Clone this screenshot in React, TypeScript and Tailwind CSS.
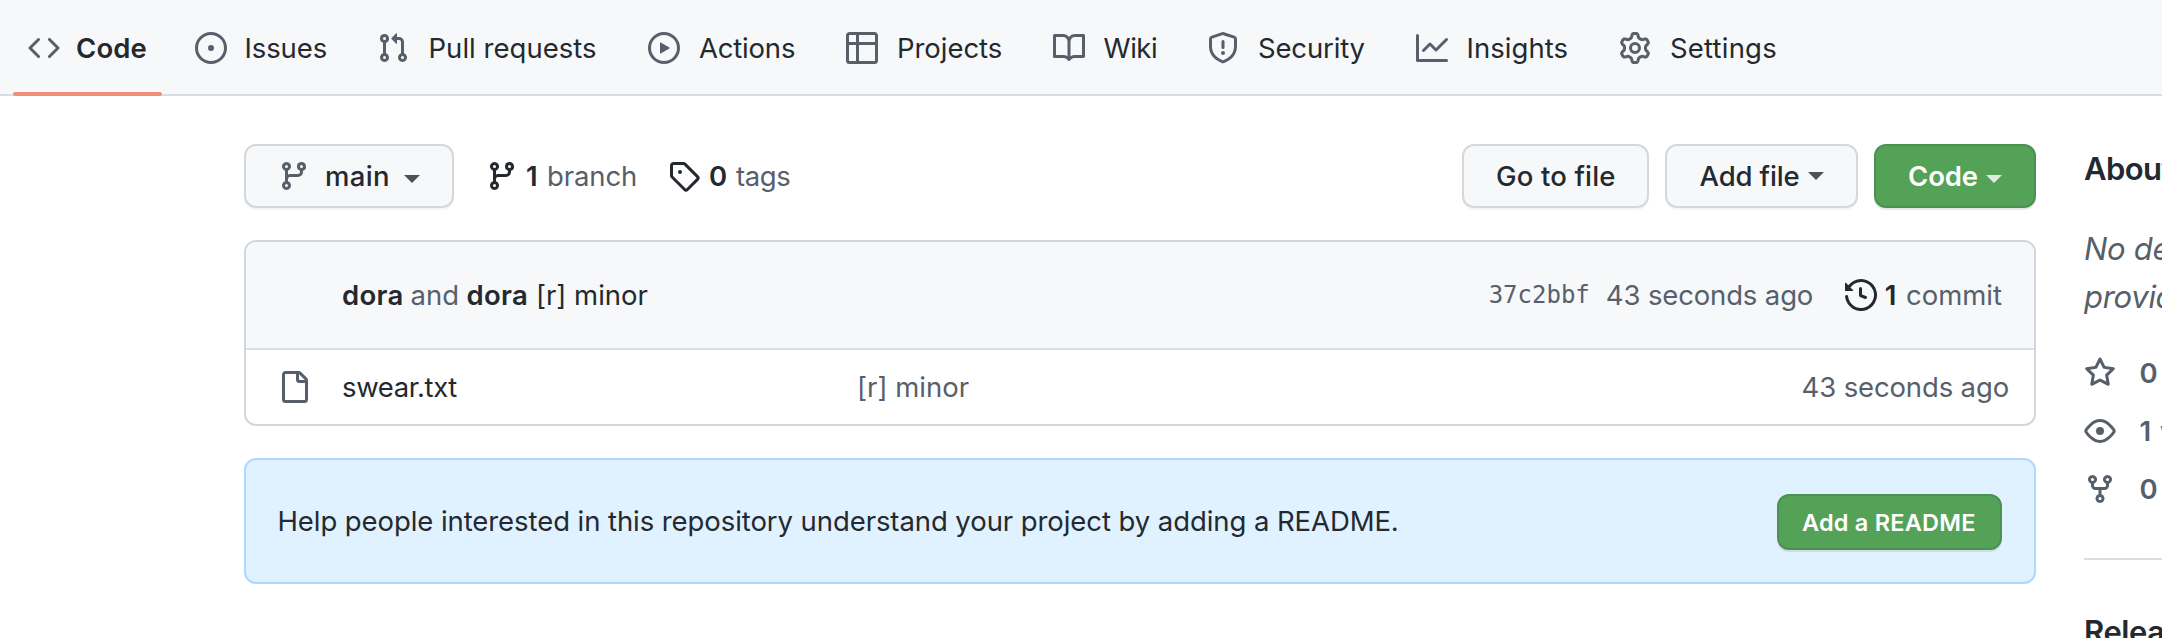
import React from "react";

const PATHS = {
  code: "M4.72 3.22a.75.75 0 011.06 1.06L2.06 8l3.72 3.72a.75.75 0 11-1.06 1.06L.47 8.53a.75.75 0 010-1.06l4.25-4.25zm6.56 0a.75.75 0 10-1.06 1.06L13.94 8l-3.72 3.72a.75.75 0 101.06 1.06l4.25-4.25a.75.75 0 000-1.06l-4.25-4.25z",
  issue: "M8 9.5a1.5 1.5 0 100-3 1.5 1.5 0 000 3zM8 0a8 8 0 100 16A8 8 0 008 0zM1.5 8a6.5 6.5 0 1113 0 6.5 6.5 0 01-13 0z",
  pull: "M7.177 3.073L9.573.677A.25.25 0 0110 .854v4.792a.25.25 0 01-.427.177L7.177 3.427a.25.25 0 010-.354zM3.75 2.5a.75.75 0 100 1.5.75.75 0 000-1.5zm-2.25.75a2.25 2.25 0 113 2.122v5.256a2.251 2.251 0 11-1.5 0V5.372A2.25 2.25 0 011.5 3.25zM11 2.5h-1V4h1a1 1 0 011 1v5.628a2.251 2.251 0 101.5 0V5A2.5 2.5 0 0011 2.5zm1 10.25a.75.75 0 111.5 0 .75.75 0 01-1.5 0zM3.75 12a.75.75 0 100 1.5.75.75 0 000-1.5z",
  play: "M1.5 8a6.5 6.5 0 1113 0 6.5 6.5 0 01-13 0zM8 0a8 8 0 100 16A8 8 0 008 0zM6.379 5.227A.25.25 0 006 5.442v5.117a.25.25 0 00.379.214l4.264-2.559a.25.25 0 000-.428L6.379 5.227z",
  table: "M0 1.75C0 .784.784 0 1.75 0h12.5C15.216 0 16 .784 16 1.75v12.5A1.75 1.75 0 0114.25 16H1.75A1.75 1.75 0 010 14.25V1.75zM1.5 6.5v7.75c0 .138.112.25.25.25H5v-8H1.5zM6.5 6.5v8h7.75a.25.25 0 00.25-.25V6.5h-8zM14.5 5V1.75a.25.25 0 00-.25-.25H6.5V5h8zM5 5V1.5H1.75a.25.25 0 00-.25.25V5H5z",
  book: "M0 1.75A.75.75 0 01.75 1h4.253c1.227 0 2.317.59 3 1.501A3.744 3.744 0 0111.006 1h4.245a.75.75 0 01.75.75v10.5a.75.75 0 01-.75.75h-4.507a2.25 2.25 0 00-1.591.659l-.622.621a.75.75 0 01-1.06 0l-.622-.621A2.25 2.25 0 005.258 13H.75a.75.75 0 01-.75-.75V1.75zm8.755 3a2.25 2.25 0 012.25-2.25H14.5v9h-3.757c-.71 0-1.4.201-1.992.572l.004-7.322zm-1.504 7.324l.004-5.073-.002-2.253A2.25 2.25 0 005.003 2.5H1.5v9h3.757a3.75 3.75 0 011.994.574z",
  shield: "M7.467.133a1.75 1.75 0 011.066 0l5.25 1.68A1.75 1.75 0 0115 3.48V7c0 1.566-.32 3.182-1.303 4.682-.983 1.498-2.585 2.813-5.032 3.855a1.7 1.7 0 01-1.33 0c-2.447-1.042-4.049-2.357-5.032-3.855C1.32 10.182 1 8.566 1 7V3.48a1.75 1.75 0 011.217-1.667l5.25-1.68zm.61 1.429a.25.25 0 00-.153 0l-5.25 1.68a.25.25 0 00-.174.238V7c0 1.358.275 2.666 1.057 3.86.784 1.194 2.121 2.34 4.366 3.297a.2.2 0 00.154 0c2.245-.956 3.582-2.104 4.366-3.298C13.225 9.666 13.5 8.36 13.5 7V3.48a.25.25 0 00-.174-.237l-5.25-1.68zM9 10.5a1 1 0 11-2 0 1 1 0 012 0zm-.25-5.75a.75.75 0 10-1.5 0v3a.75.75 0 001.5 0v-3z",
  graph: "M1.5 1.75a.75.75 0 00-1.5 0v12.5c0 .414.336.75.75.75h14.5a.75.75 0 000-1.5H1.5V1.75zm14.28 2.53a.75.75 0 00-1.06-1.06L10 7.94 7.53 5.47a.75.75 0 00-1.06 0L3.22 8.72a.75.75 0 001.06 1.06L7 7.06l2.47 2.47a.75.75 0 001.06 0l5.25-5.25z",
  gear: "M7.429 1.525a6.593 6.593 0 011.142 0c.036.003.108.036.137.146l.289 1.105c.147.56.55.967.997 1.189.174.086.341.183.501.29.417.278.97.423 1.53.27l1.102-.303c.11-.03.175.016.195.046.219.31.41.641.573.989.014.031.022.11-.059.19l-.815.806c-.411.406-.562.957-.53 1.456a4.588 4.588 0 010 .582c-.032.499.119 1.05.53 1.456l.815.806c.08.08.073.159.059.19a6.494 6.494 0 01-.573.99c-.02.029-.086.074-.195.045l-1.103-.303c-.559-.153-1.112-.008-1.529.27-.16.107-.327.204-.5.29-.449.222-.851.628-.998 1.189l-.289 1.105c-.029.11-.101.143-.137.146a6.613 6.613 0 01-1.142 0c-.036-.003-.108-.037-.137-.146l-.289-1.105c-.147-.56-.55-.967-.997-1.189a4.502 4.502 0 01-.501-.29c-.417-.278-.97-.423-1.53-.27l-1.102.303c-.11.03-.175-.016-.195-.046a6.492 6.492 0 01-.573-.989c-.014-.031-.022-.11.059-.19l.815-.806c.411-.406.562-.957.53-1.456a4.587 4.587 0 010-.582c.032-.499-.119-1.05-.53-1.456l-.815-.806c-.08-.08-.073-.159-.059-.19a6.44 6.44 0 01.573-.99c.02-.029.086-.075.195-.045l1.103.303c.559.153 1.112.008 1.529-.27.16-.107.327-.204.5-.29.449-.222.851-.628.998-1.189l.289-1.105c.029-.11.101-.143.137-.146zM8 0c-.236 0-.47.01-.701.03-.743.065-1.29.615-1.458 1.261l-.29 1.106c-.017.066-.078.158-.211.224a5.994 5.994 0 00-.668.386c-.123.082-.233.09-.3.071L3.27 2.776c-.644-.177-1.392.02-1.82.63a7.977 7.977 0 00-.704 1.217c-.315.675-.111 1.422.363 1.891l.815.806c.05.048.098.147.088.294a6.084 6.084 0 000 .772c.01.147-.038.246-.088.294l-.815.806c-.474.469-.678 1.216-.363 1.891.2.428.436.835.704 1.218.428.609 1.176.806 1.82.63l1.103-.303c.066-.019.176-.011.299.071.213.143.436.272.668.386.133.066.194.158.212.224l.289 1.106c.169.646.715 1.196 1.458 1.26a8.094 8.094 0 001.402 0c.743-.064 1.29-.614 1.458-1.26l.29-1.106c.017-.066.078-.158.211-.224a5.98 5.98 0 00.668-.386c.123-.082.233-.09.3-.071l1.102.302c.644.177 1.392-.02 1.82-.63.268-.382.505-.789.704-1.217.315-.675.111-1.422-.364-1.891l-.814-.806c-.05-.048-.098-.147-.088-.294a6.1 6.1 0 000-.772c-.01-.147.039-.246.088-.294l.814-.806c.475-.469.679-1.216.364-1.891a7.992 7.992 0 00-.704-1.218c-.428-.609-1.176-.806-1.82-.63l-1.103.303c-.066.019-.176.011-.299-.071a5.991 5.991 0 00-.668-.386c-.133-.066-.194-.158-.212-.224L10.16 1.29C9.99.645 9.444.095 8.701.031A8.094 8.094 0 008 0zm1.5 8a1.5 1.5 0 11-3 0 1.5 1.5 0 013 0zM11 8a3 3 0 11-6 0 3 3 0 016 0z",
  branch: "M11.75 2.5a.75.75 0 100 1.5.75.75 0 000-1.5zm-2.25.75a2.25 2.25 0 113 2.122V6A2.5 2.5 0 0110 8.5H6a1 1 0 00-1 1v1.128a2.251 2.251 0 11-1.5 0V5.372a2.25 2.25 0 111.5 0v1.836A2.492 2.492 0 016 7h4a1 1 0 001-1v-.628A2.25 2.25 0 019.5 3.25zM4.25 12a.75.75 0 100 1.5.75.75 0 000-1.5zM3.5 3.25a.75.75 0 111.5 0 .75.75 0 01-1.5 0z",
  tag: "M2.5 7.775V2.75a.25.25 0 01.25-.25h5.025a.25.25 0 01.177.073l6.25 6.25a.25.25 0 010 .354l-5.025 5.025a.25.25 0 01-.354 0l-6.25-6.25a.25.25 0 01-.073-.177zm-1.5 0V2.75C1 1.784 1.784 1 2.75 1h5.025c.464 0 .91.184 1.238.513l6.25 6.25a1.75 1.75 0 010 2.474l-5.026 5.026a1.75 1.75 0 01-2.474 0l-6.25-6.25A1.75 1.75 0 011 7.775zM6 5a1 1 0 100 2 1 1 0 000-2z",
  history: "M1.643 3.143L.427 1.927A.25.25 0 000 2.104V5.75c0 .138.112.25.25.25h3.646a.25.25 0 00.177-.427L2.715 4.215a6.5 6.5 0 11-1.18 4.458.75.75 0 10-1.493.154 8.001 8.001 0 101.6-5.684zM7.75 4a.75.75 0 01.75.75v2.992l2.028.812a.75.75 0 01-.557 1.392l-2.5-1A.75.75 0 017 8.25v-3.5A.75.75 0 017.75 4z",
  file: "M3.75 1.5a.25.25 0 00-.25.25v12.5c0 .138.112.25.25.25h9.5a.25.25 0 00.25-.25V6h-2.75A1.75 1.75 0 019 4.25V1.5H3.75zm6.75.062V4.25c0 .138.112.25.25.25h2.688a.252.252 0 00-.011-.013l-2.914-2.914a.272.272 0 00-.013-.011zM2 1.75C2 .784 2.784 0 3.75 0h6.586c.464 0 .909.184 1.237.513l2.914 2.914c.329.328.513.773.513 1.237v9.586A1.75 1.75 0 0113.25 16h-9.5A1.75 1.75 0 012 14.25V1.75z",
  star: "M8 .25a.75.75 0 01.673.418l1.882 3.815 4.21.612a.75.75 0 01.416 1.279l-3.046 2.97.719 4.192a.75.75 0 01-1.088.791L8 12.347l-3.766 1.98a.75.75 0 01-1.088-.79l.72-4.194L.818 6.374a.75.75 0 01.416-1.28l4.21-.611L7.327.668A.75.75 0 018 .25zm0 2.445L6.615 5.5a.75.75 0 01-.564.41l-3.097.45 2.24 2.184a.75.75 0 01.216.664l-.528 3.084 2.769-1.456a.75.75 0 01.698 0l2.77 1.456-.53-3.084a.75.75 0 01.216-.664l2.24-2.183-3.096-.45a.75.75 0 01-.564-.41L8 2.694v.001z",
  eye: "M1.679 7.932c.412-.621 1.242-1.75 2.366-2.717C5.175 4.242 6.527 3.5 8 3.5c1.473 0 2.824.742 3.955 1.715 1.124.967 1.954 2.096 2.366 2.717a.119.119 0 010 .136c-.412.621-1.242 1.75-2.366 2.717C10.825 11.758 9.473 12.5 8 12.5c-1.473 0-2.824-.742-3.955-1.715C2.92 9.818 2.09 8.69 1.679 8.068a.119.119 0 010-.136zM8 2c-1.981 0-3.67.992-4.933 2.078C1.797 5.169.88 6.423.43 7.1a1.619 1.619 0 000 1.798c.45.678 1.367 1.932 2.637 3.024C4.329 13.008 6.019 14 8 14c1.981 0 3.67-.992 4.933-2.078 1.27-1.091 2.187-2.345 2.637-3.023a1.619 1.619 0 000-1.798c-.45-.678-1.367-1.932-2.637-3.023C11.671 2.992 9.981 2 8 2zm0 8a2 2 0 100-4 2 2 0 000 4z",
  fork: "M5 3.25a.75.75 0 11-1.5 0 .75.75 0 011.5 0zm0 2.122a2.25 2.25 0 10-1.5 0v.878A2.25 2.25 0 005.75 8.5h1.5v2.128a2.251 2.251 0 101.5 0V8.5h1.5a2.25 2.25 0 002.25-2.25v-.878a2.25 2.25 0 10-1.5 0v.878a.75.75 0 01-.75.75h-4.5A.75.75 0 015 6.25v-.878zm3.75 7.378a.75.75 0 11-1.5 0 .75.75 0 011.5 0zm3-8.75a.75.75 0 100-1.5.75.75 0 000 1.5z",
};

type IconName = keyof typeof PATHS;

function Icon({ name, className = "" }: { name: IconName; className?: string }) {
  return (
    <svg viewBox="0 0 16 16" aria-hidden="true" className={`size-8 shrink-0 fill-current ${className}`}>
      <path fillRule="evenodd" d={PATHS[name]} />
    </svg>
  );
}

function Caret({ className = "" }: { className?: string }) {
  return (
    <svg viewBox="0 0 16 8" aria-hidden="true" className={`h-2 w-4 shrink-0 fill-current opacity-80 ${className}`}>
      <path d="M0 0h16L8 8z" />
    </svg>
  );
}

const TABS: { icon: IconName; label: string; box: string; text: string }[] = [
  { icon: "issue", label: "Issues", box: "w-[182px] gap-[17.5px]", text: "tracking-[-0.1px]" },
  { icon: "pull", label: "Pull requests", box: "w-[271px] gap-[19.5px]", text: "tracking-[0.03px]" },
  { icon: "play", label: "Actions", box: "w-[198px] gap-[19px]", text: "tracking-[-0.2px]" },
  { icon: "table", label: "Projects", box: "w-[207px] gap-[19px]", text: "tracking-[-0.05px]" },
  { icon: "book", label: "Wiki", box: "w-[154px] gap-[18.5px]", text: "tracking-[-0.45px]" },
  { icon: "shield", label: "Security", box: "w-[209px] gap-[19px]", text: "tracking-[-0.16px]" },
  { icon: "graph", label: "Insights", box: "w-[203px] gap-[18.5px]", text: "tracking-[0.05px]" },
  { icon: "gear", label: "Settings", box: "gap-[19px]", text: "tracking-[0.2px]" },
];

function Nav() {
  return (
    <nav className="flex h-24 shrink-0 border-b-2 border-[#d8dee4] bg-[#f6f8fa] pl-3">
      <div className="flex h-24 w-[183px] shrink-0">
        <a className="relative flex h-24 w-[150px] items-center gap-4 pl-4">
          <Icon name="code" className="text-[#57606a]" />
          <span className="font-semibold tracking-[0.15px]">Code</span>
          <i className="absolute bottom-0 left-[0.5px] h-1 w-[149.5px] rounded-[2px] bg-[#f18e77]" />
        </a>
      </div>
      {TABS.map((t) => (
        <a key={t.label} className={`flex h-24 shrink-0 items-center ${t.box}`}>
          <Icon name={t.icon} className="text-[#57606a]" />
          <span className={t.text}>{t.label}</span>
        </a>
      ))}
    </nav>
  );
}

const BUTTON = "flex h-16 shrink-0 items-center rounded-xl border-2 border-[#d5d8da] bg-[#f6f8fa] font-medium shadow-[0_2px_0_rgba(27,31,36,0.04)]";
const GREEN = "flex shrink-0 items-center rounded-xl border-2 border-[#4b9150] bg-[#54a258] font-semibold text-white shadow-[0_2px_0_rgba(27,31,36,0.1)]";

function Toolbar() {
  return (
    <div className="flex h-16 items-center">
      <button className={`${BUTTON} w-[210px] pl-8`}>
        <Icon name="branch" className="text-[#57606a]" />
        <span className="ml-[15px] w-[79px] text-left tracking-[0.34px]">main</span>
        <Caret className="mt-1.5" />
      </button>
      <Icon name="branch" className="ml-8" />
      <span className="ml-2 w-[11.5px] font-semibold">1</span>
      <span className="ml-[9.5px] w-[91px] tracking-[-0.1px] text-[#57606a]">branch</span>
      <Icon name="tag" className="ml-[30px]" />
      <span className="ml-[9px] w-[18px] font-semibold">0</span>
      <span className="ml-[9px] tracking-[-0.4px] text-[#57606a]">tags</span>
      <div className="ml-auto flex">
        <button className={`${BUTTON} w-[187px] pl-8`}>
          <span className="tracking-[0.15px]">Go to file</span>
        </button>
        <button className={`${BUTTON} ml-4 w-[193px] pl-[32.5px]`}>
          <span className="w-[108.5px] text-left tracking-[-0.14px]">Add file</span>
          <Caret />
        </button>
        <button className={`${GREEN} ml-4 h-16 w-[162px] pl-8`}>
          <span className="w-[78px] text-left tracking-[-0.1px]">Code</span>
          <Caret className="mt-1.5" />
        </button>
      </div>
    </div>
  );
}

function FileTable() {
  return (
    <section className="mt-8 overflow-hidden rounded-xl border-2 border-[#d0d7de]">
      <div className="flex h-[108px] items-center border-b-2 border-[#d8dee4] bg-[#f6f8fa] pr-[32px] pl-24">
        <b className="w-[62px] font-semibold tracking-[0.35px]">dora</b>
        <span className="ml-[6.5px] w-[49px] tracking-[0.05px] text-[#57606a]">and</span>
        <b className="ml-[7px] w-[62px] font-semibold tracking-[0.35px]">dora</b>
        <span className="ml-[7.5px] tracking-[-0.02px]">[r] minor</span>
        <span className="ml-auto font-['DejaVu_Sans_Mono',monospace] text-2xl text-[#57606a]">37c2bbf</span>
        <span className="ml-4 w-[208.5px] tracking-[-0.14px] text-[#57606a]">43 seconds ago</span>
        <Icon name="history" className="ml-[30.5px]" />
        <span className="ml-2 font-semibold">1</span>
        <span className="ml-[9.5px] text-[#57606a]">commit</span>
      </div>
      <div className="flex h-[74px] items-center pr-[25px] pl-8">
        <Icon name="file" className="text-[#57606a]" />
        <span className="ml-8 w-[515px] tracking-[-0.38px]">swear.txt</span>
        <span className="text-[#57606a]">[r] minor</span>
        <span className="ml-auto tracking-[-0.14px] text-[#57606a]">43 seconds ago</span>
      </div>
    </section>
  );
}

function ReadmeBanner() {
  return (
    <section className="mt-8 flex h-[126px] items-center justify-between rounded-xl border-2 border-[#b0d7ff] bg-[#e0f2ff] pr-8 pl-[31.5px]">
      <p className="tracking-[-0.075px]">
        Help people interested in this repository understand your project by adding a README.
      </p>
      <button className={`${GREEN} mt-0.5 h-14 w-[225px] pl-[23px]`}>
        <span className="pt-0.5 text-[23.5px] tracking-[0.22px]">Add a README</span>
      </button>
    </section>
  );
}

const STATS: { icon: IconName; count: string; label: string }[] = [
  { icon: "star", count: "0", label: "stars" },
  { icon: "eye", count: "1", label: "watching" },
  { icon: "fork", count: "0", label: "forks" },
];

function Sidebar() {
  return (
    <aside className="w-[592px] shrink-0">
      <h2 className="mt-[1px] h-12 text-[31px] leading-12 font-semibold tracking-[-0.55px]">About</h2>
      <p className="mt-8 text-[31px] leading-12 tracking-[-0.3px] text-[#57606a] italic">
        No description, website, or topics
        <br />
        provided.
      </p>
      <ul className="mt-[23px] text-[#57606a]">
        {STATS.map((s) => (
          <li key={s.icon} className="flex h-[58px] items-center">
            <Icon name={s.icon} />
            <strong className="ml-[23.5px] font-semibold">{s.count}</strong>
            <span className="ml-[8.5px]">{s.label}</span>
          </li>
        ))}
      </ul>
      <hr className="mt-10 border-t-2 border-[#d8dee4]" />
      <h2 className="mt-12 text-[31px] leading-12 font-semibold tracking-[-0.4px]">Releases</h2>
    </aside>
  );
}

export default function App() {
  return (
    <div className="flex h-[638px] w-[2162px] flex-col overflow-hidden bg-white font-['Inter',sans-serif] text-[27.5px] leading-[42px] whitespace-nowrap text-[#24292f]">
      <Nav />
      <div className="flex gap-12 pt-12 pl-[244px]">
        <main className="w-[1792px] shrink-0">
          <Toolbar />
          <FileTable />
          <ReadmeBanner />
        </main>
        <Sidebar />
      </div>
    </div>
  );
}
